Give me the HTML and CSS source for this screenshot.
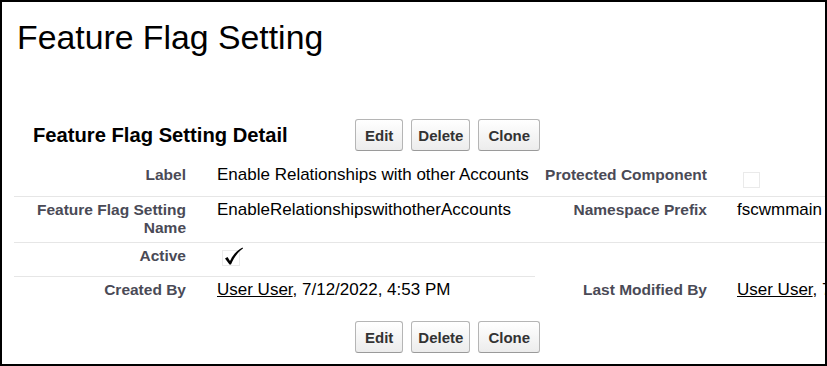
FILE: index.html
```html
<!DOCTYPE html>
<html lang="en">
<head>
	<meta charset="UTF-8">
	<title>Feature Flag Setting</title>
	<link rel="stylesheet" href="styles.css">
</head>
<body>
	<div class="frame">
		<h1 class="page-title">Feature Flag Setting</h1>

		<div class="pb-row pb-top">
			<h2 class="pb-title">Feature Flag Setting Detail</h2>
			<div class="pb-buttons">
				<button class="btn btn-edit">Edit</button>
				<button class="btn btn-delete">Delete</button>
				<button class="btn btn-clone">Clone</button>
			</div>
		</div>

		<div class="detail-list">
			<div class="label-col">Label</div>
			<div class="data-col">Enable Relationships with other Accounts</div>
			<div class="label-col">Protected Component</div>
			<div class="data-col data-col2">
				<svg class="checkbox cb-right" width="18" height="17" viewBox="0 0 18 17">
					<rect x="0.5" y="0.5" width="16" height="15" fill="none" stroke="#d4d4d4" stroke-dasharray="1 1"/>
				</svg>
			</div>

			<div class="label-col">Feature Flag Setting Name</div>
			<div class="data-col">EnableRelationshipswithotherAccounts</div>
			<div class="label-col">Namespace Prefix</div>
			<div class="data-col data-col2">fscwmmain</div>

			<div class="label-col">Active</div>
			<div class="data-col">
				<svg class="checkbox cb-active" width="24" height="20" viewBox="0 0 24 20">
					<rect x="0.5" y="3.5" width="17" height="15" fill="none" stroke="#d4d4d4" stroke-dasharray="1 1"/>
					<path d="M3 11.5 L5.5 10 L8 14 C10.5 8.5 14.5 3.5 20.5 0.5 L21 1.5 C16 5 12 10.5 9 17.5 L7.5 17.5 Z" fill="#000"/>
				</svg>
			</div>
			<div class="label-col no-line"></div>
			<div class="data-col no-line"></div>

			<div class="label-col no-line">Created By</div>
			<div class="data-col no-line"><a href="#">User User</a>, 7/12/2022, 4:53 PM</div>
			<div class="label-col no-line">Last Modified By</div>
			<div class="data-col data-col2 no-line"><a href="#">User User</a>, 7/12/2022, 4:53 PM</div>
		</div>

		<div class="pb-row pb-bottom">
			<div class="pb-title"></div>
			<div class="pb-buttons">
				<button class="btn btn-edit">Edit</button>
				<button class="btn btn-delete">Delete</button>
				<button class="btn btn-clone">Clone</button>
			</div>
		</div>
	</div>
</body>
</html>
```

FILE: styles.css
```css
body{ margin: 0; padding: 0; font-family: "Liberation Sans", Arial, sans-serif; color: #000; background: #fff; }
.frame{ width: 827px; height: 366px; box-sizing: border-box; border: 2px solid #000; overflow: hidden; }

.page-title{ margin: 15px 0 0 15px; font-size: 33.8px; font-weight: normal; line-height: 40px; white-space: nowrap; }

.pb-row{ display: flex; align-items: center; padding-left: 31px; }
.pb-top{ margin-top: 62px; }
.pb-bottom{ margin-top: 17px; }
.pb-title{ width: 322px; flex: none; margin: 0; font-size: 20.2px; font-weight: bold; line-height: 22px; white-space: nowrap; }
.pb-buttons{ display: flex; gap: 8px; }

.btn{ height: 32px; padding: 0 6px; border: 1px solid #b5b5b5; border-bottom-color: #9a9a9a; border-radius: 3px; background: linear-gradient(#ffffff, #ececec); color: #333; font-family: "Liberation Sans", Arial, sans-serif; font-size: 15px; font-weight: bold; cursor: pointer; }
.btn-edit{ padding: 0 9px; }
.btn-clone{ padding: 0 9px; }

.detail-list{ display: grid; grid-template-columns: 182px 339px 182px 339px; margin: 11px 0 0 12px; width: 1042px; }
.label-col, .data-col{ padding: 4px 10px 5px 0; line-height: 18px; border-bottom: 1px solid #e6e6e6; }
.label-col{ text-align: right; font-size: 15.5px; font-weight: bold; color: #4a4a56; }
.data-col{ padding-left: 21px; font-size: 17px; white-space: nowrap; }
.data-col2{ padding-left: 20px; }
.no-line{ border-bottom: none; }

.data-col a{ color: #000; text-decoration: underline; }

.checkbox{ display: block; }
.cb-right{ margin: 6px 0 2px 6px; }
.cb-active{ margin: 0 0 4px 5px; }
```
